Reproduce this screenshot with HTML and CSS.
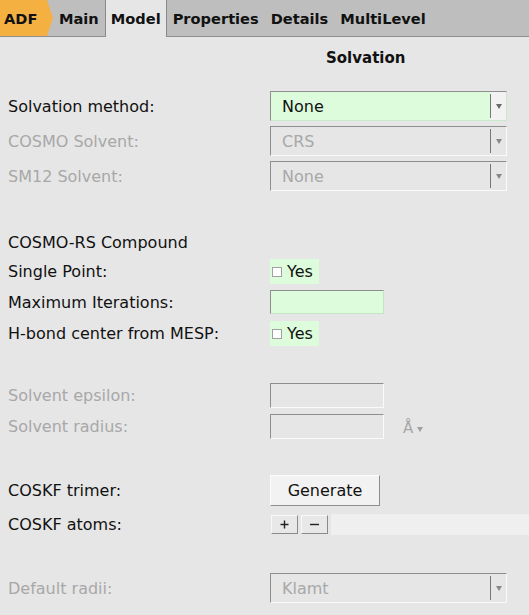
FILE: index.html
```html
<!DOCTYPE html>
<html>
<head>
<meta charset="utf-8">
<link rel="stylesheet" href="styles.css">
</head>
<body>
<div class="tabbar">
  <div class="tab adf">ADF</div>
  <div class="tab">Main</div>
  <div class="tab active">Model</div>
  <div class="tab">Properties</div>
  <div class="tab">Details</div>
  <div class="tab">MultiLevel</div>
</div>
<div class="content">
  <div class="title"><span>Solvation</span></div>

  <div class="row r-sel first">
    <div class="label">Solvation method:</div>
    <div class="select green"><span class="val">None</span><span class="arrow"><span class="tri"></span></span></div>
  </div>
  <div class="row r-sel g5">
    <div class="label dis">COSMO Solvent:</div>
    <div class="select dis"><span class="val">CRS</span><span class="arrow"><span class="tri"></span></span></div>
  </div>
  <div class="row r-sel g5">
    <div class="label dis">SM12 Solvent:</div>
    <div class="select dis"><span class="val">None</span><span class="arrow"><span class="tri"></span></span></div>
  </div>

  <div class="row r-text big">
    <div class="label">COSMO-RS Compound</div>
  </div>
  <div class="row r-chk g4">
    <div class="label">Single Point:</div>
    <div class="check"><span class="box"></span><span>Yes</span></div>
  </div>
  <div class="row r-inp g6">
    <div class="label">Maximum Iterations:</div>
    <div class="input green"></div>
  </div>
  <div class="row r-chk g7">
    <div class="label">H-bond center from MESP:</div>
    <div class="check"><span class="box"></span><span>Yes</span></div>
  </div>

  <div class="row r-chk big2">
    <div class="label dis">Solvent epsilon:</div>
    <div class="input"></div>
  </div>
  <div class="row r-chk g6">
    <div class="label dis">Solvent radius:</div>
    <div class="ctrl">
      <div class="input"></div>
      <span class="unit">Å <span class="utri"></span></span>
    </div>
  </div>

  <div class="row r-btn big3">
    <div class="label">COSKF trimer:</div>
    <div class="button">Generate</div>
  </div>
  <div class="row r-atoms g8">
    <div class="label">COSKF atoms:</div>
    <div class="atoms">
      <div class="small-btn"><svg width="11" height="11" viewBox="0 0 11 11"><path d="M5.5 1.5v8M1.5 5.5h8" stroke="#222" stroke-width="1.4"/></svg></div>
      <div class="small-btn"><svg width="11" height="11" viewBox="0 0 11 11"><path d="M1 5.5h9" stroke="#222" stroke-width="1.4"/></svg></div>
      <div class="strip"></div>
    </div>
  </div>

  <div class="row r-sel big">
    <div class="label dis">Default radii:</div>
    <div class="select dis"><span class="val">Klamt</span><span class="arrow"><span class="tri"></span></span></div>
  </div>
</div>
</body>
</html>
```

FILE: styles.css
```css
html, body {
  margin: 0;
  padding: 0;
}
body {
  background: #e6e6e6;
  font-family: "DejaVu Sans", "Liberation Sans", sans-serif;
  font-size: 16px;
  color: #111;
  width: 529px;
  height: 615px;
  overflow: hidden;
}
.tabbar {
  display: flex;
  height: 36px;
  background: #bebebe;
  border-bottom: 1px solid #8f8f8f;
  font-weight: bold;
  font-size: 14.6px;
  align-items: stretch;
}
.tab {
  display: flex;
  align-items: center;
  padding: 0 6px;
  color: #111;
}
.tab.adf {
  width: 53px;
  padding: 0 0 0 4px;
  box-sizing: border-box;
  background: #f5b042;
  clip-path: polygon(0 0, 47px 0, 53px 50%, 47px 100%, 0 100%);
}
.tab.active {
  background: #e6e6e6;
  border-left: 1px solid #8a8a8a;
  border-right: 1px solid #8a8a8a;
  margin-bottom: -1px;
  padding: 0 5px;
}
.content {
  display: flex;
  flex-direction: column;
}
.title {
  height: 42px;
  display: flex;
  align-items: center;
  padding-left: 326px;
  font-weight: bold;
  font-size: 15px;
}
.row {
  display: grid;
  grid-template-columns: 262px auto;
  align-items: center;
  padding-left: 8px;
}
.r-sel { height: 30px; }
.r-text { height: 26px; }
.r-chk { height: 25px; }
.r-inp { height: 24px; }
.r-btn { height: 31px; }
.r-atoms { height: 21px; }
.first { margin-top: 12px; }
.g4 { margin-top: 4px; }
.g5 { margin-top: 5px; }
.g6 { margin-top: 6px; }
.g7 { margin-top: 7px; }
.g8 { margin-top: 8px; }
.big { margin-top: 38px; }
.big2 { margin-top: 37px; }
.big3 { margin-top: 36px; }
.label { white-space: nowrap; }
.dis { color: #a8a8a8; }

.select {
  box-sizing: border-box;
  width: 237px;
  height: 30px;
  display: flex;
  align-items: center;
  border: 1px solid #8e8e8e;
  border-right-color: #fafafa;
  border-bottom-color: #fafafa;
  background: #e6e6e6;
}
.select.green {
  background: #dcfcdc;
  border-bottom-color: #c9e8c9;
  border-right-color: #c9e8c9;
}
.select .val {
  flex: 1;
  padding-left: 11px;
}
.select .arrow {
  align-self: stretch;
  width: 16px;
  display: flex;
  align-items: center;
  justify-content: center;
  position: relative;
}
.select.green .arrow { background: #f2f2f2; }
.select .arrow::before {
  content: "";
  position: absolute;
  left: 0;
  top: 2px;
  bottom: 2px;
  border-left: 1px solid #777;
}
.tri {
  width: 0;
  height: 0;
  border-left: 3px solid transparent;
  border-right: 3px solid transparent;
  border-top: 5px solid #6a6a6a;
  margin-left: 1px;
}
.select.dis .tri { border-top-color: #888; }

.check {
  width: 49px;
  height: 25px;
  background: #dcfcdc;
  display: flex;
  align-items: center;
  color: #111;
}
.box {
  box-sizing: border-box;
  width: 10px;
  height: 10px;
  background: #fff;
  border: 1px solid #a0a0a0;
  margin: 1px 5px 0 2px;
}
.input {
  box-sizing: border-box;
  width: 114px;
  height: 25px;
  border: 1px solid #8e8e8e;
  border-right-color: #fafafa;
  border-bottom-color: #fafafa;
}
.input.green {
  height: 24px;
  background: #dcfcdc;
  border-right-color: #c4e4c4;
  border-bottom-color: #c4e4c4;
}
.ctrl {
  display: flex;
  align-items: center;
}
.unit {
  margin-left: 19px;
  color: #a8a8a8;
  display: flex;
  align-items: center;
  font-size: 15px;
  margin-top: 3px;
}
.utri {
  width: 0;
  height: 0;
  border-left: 3px solid transparent;
  border-right: 3px solid transparent;
  border-top: 5px solid #a0a0a0;
  margin-left: 4px;
  margin-top: 2px;
}
.button {
  box-sizing: border-box;
  width: 110px;
  height: 31px;
  background: #f2f2f2;
  border: 1px solid #fbfbfb;
  border-right-color: #8e8e8e;
  border-bottom-color: #8e8e8e;
  display: flex;
  align-items: center;
  justify-content: center;
  color: #111;
}
.atoms {
  display: flex;
  align-items: center;
  height: 21px;
}
.small-btn {
  box-sizing: border-box;
  width: 27px;
  height: 19px;
  margin-left: 1px;
  margin-right: 3px;
  background: #e8e8e8;
  border: 1px solid #f8f8f8;
  border-right-color: #8a8a8a;
  border-bottom-color: #8a8a8a;
  display: flex;
  align-items: center;
  justify-content: center;
}
.small-btn + .small-btn { margin-left: 0; }
.strip {
  flex: 1;
  align-self: stretch;
  background: #efefef;
  margin-left: 0;
}
```
